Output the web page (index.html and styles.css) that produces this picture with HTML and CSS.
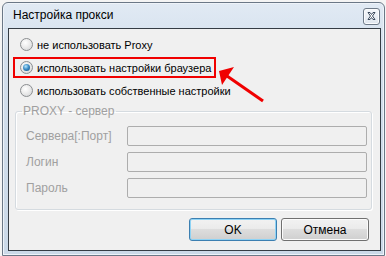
FILE: index.html
```html
<!DOCTYPE html>
<html>
    <head>
        <link rel="stylesheet" href="styles.css">
        <title>Настройка прокси</title>
    </head>

    <body>
        <div class="window">
            <div class="titlebar">
                <span class="title">Настройка прокси</span>
                <button class="close-button">
                    <svg width="9" height="8" viewBox="0 0 9 8">
                        <path d="M1 0.5h2l1.5 2 1.5-2h2l-2.5 3.5 2.5 3.5h-2l-1.5-2-1.5 2h-2l2.5-3.5z" fill="#fff" stroke="#3b4a5c" stroke-width="1"/>
                    </svg>
                </button>
            </div>

            <div class="client">
                <div class="proxy-modes">
                    <label class="radio-row"><span class="radio"></span>не использовать Proxy</label>
                    <label class="radio-row"><span class="radio checked"></span>использовать настройки браузера</label>
                    <label class="radio-row"><span class="radio"></span>использовать собственные настройки</label>
                </div>

                <fieldset class="server-group">
                    <legend>PROXY - сервер</legend>
                    <div class="field-row">
                        <span class="field-label">Сервера[:Порт]</span>
                        <input class="field-input" type="text" disabled>
                    </div>
                    <div class="field-row">
                        <span class="field-label">Логин</span>
                        <input class="field-input" type="text" disabled>
                    </div>
                    <div class="field-row">
                        <span class="field-label">Пароль</span>
                        <input class="field-input" type="password" disabled>
                    </div>
                </fieldset>

                <div class="dialog-buttons">
                    <button class="dialog-button default">OK</button>
                    <button class="dialog-button">Отмена</button>
                </div>

                <!-- annotation drawn on top of the dialog -->
                <div class="highlight-box"></div>
                <svg class="arrow-overlay" width="371" height="221" viewBox="9 29 371 221">
                    <line x1="263" y1="101" x2="227" y2="76" stroke="#f00000" stroke-width="3"/>
                    <polygon points="219,71 234,67 222,85" fill="#f00000"/>
                </svg>
            </div>
        </div>
    </body>
</html>
```

FILE: styles.css
```css
body {
    margin: 0;
    background-color: #f4f4f4;
    font-family: "Liberation Sans", Arial, sans-serif;
    font-size: 11px;
    color: #000;
}

.window {
    margin: 2px 0 0 2px;
    width: 383px;
    height: 254px;
    box-sizing: border-box;
    border: 1px solid #6b7887;
    border-radius: 6px 6px 0 0;
    background: linear-gradient(to bottom, #e1eaf4 0%, #d3dfec 20%, #cbd9e8 100%);
    box-shadow: inset 0 0 0 1px #eef3f9;
    padding: 0 3px 4px 5px;
    display: flex;
    flex-direction: column;
}

.titlebar {
    height: 25px;
    display: flex;
    align-items: center;
    justify-content: space-between;
    padding: 0 1px 0 5px;
}

.title {
    font-size: 12px;
    color: #000;
    margin-top: -1px;
}

.close-button {
    width: 17px;
    height: 17px;
    padding: 0;
    margin-top: 1px;
    border: 1px solid #6e7a88;
    border-radius: 3px;
    background: linear-gradient(to bottom, #f6f8fb, #dfe6ee);
    box-shadow: inset 0 0 0 1px #fbfcfd;
    display: flex;
    justify-content: center;
    align-items: center;
}

.client {
    position: relative;
    flex: 1;
    border: 1px solid #353c44;
    background-color: #f0f0f0;
    padding: 4px 8px 0 6px;
    display: flex;
    flex-direction: column;
}

.proxy-modes {
    display: flex;
    flex-direction: column;
}

.radio-row {
    height: 23px;
    display: flex;
    align-items: center;
    padding-left: 5px;
    gap: 4px;
}

.radio {
    position: relative;
    width: 13px;
    height: 13px;
    box-sizing: border-box;
    border: 1px solid #8b8e91;
    border-radius: 50%;
    background: radial-gradient(circle at 40% 35%, #ffffff 0%, #eeeeee 40%, #d0d2d4 100%);
}

.radio.checked::after {
    content: '';
    position: absolute;
    top: 2px;
    left: 2px;
    width: 7px;
    height: 7px;
    border-radius: 50%;
    background: radial-gradient(circle at 40% 35%, #b9e6fb 0%, #3d8fc9 45%, #0f4575 100%);
}

.server-group {
    margin: 3px 0 0 0;
    padding: 8px 4px 11px 10px;
    border: 1px solid #d5dbe0;
    border-radius: 3px;
    box-shadow: inset 1px 1px 0 #ffffff, 1px 1px 0 #ffffff;
    display: flex;
    flex-direction: column;
    gap: 6px;
}

.server-group legend {
    margin-left: -4px;
    padding: 0 2px 0 1px;
    line-height: 13px;
    font-size: 12px;
    color: #a0a0a0;
}

.field-row {
    display: flex;
    align-items: center;
    height: 20px;
}

.field-label {
    width: 101px;
    font-size: 12px;
    color: #a0a0a0;
}

.field-input {
    width: 240px;
    height: 20px;
    box-sizing: border-box;
    margin: 0;
    border: 1px solid #adadad;
    border-radius: 2px;
    background-color: #f0f0f0;
}

.dialog-buttons {
    display: flex;
    justify-content: flex-end;
    gap: 4px;
    margin-top: 8px;
    padding-right: 3px;
}

.dialog-button {
    width: 88px;
    height: 23px;
    padding: 0;
    border: 1px solid #707070;
    border-radius: 3px;
    background: linear-gradient(to bottom, #f2f2f2 0%, #ebebeb 45%, #dddddd 50%, #cfcfcf 100%);
    box-shadow: inset 0 0 0 1px #fbfbfb;
    font-family: "Liberation Sans", Arial, sans-serif;
    font-size: 12px;
    color: #000;
}

.dialog-button.default {
    border-color: #3c7fb1;
    box-shadow: inset 0 0 0 1px #8ed3f5;
}

.highlight-box {
    position: absolute;
    left: 4px;
    top: 28px;
    width: 203px;
    height: 21px;
    box-sizing: border-box;
    border: 2px solid #f00000;
}

.arrow-overlay {
    position: absolute;
    left: 0;
    top: 0;
}
```
